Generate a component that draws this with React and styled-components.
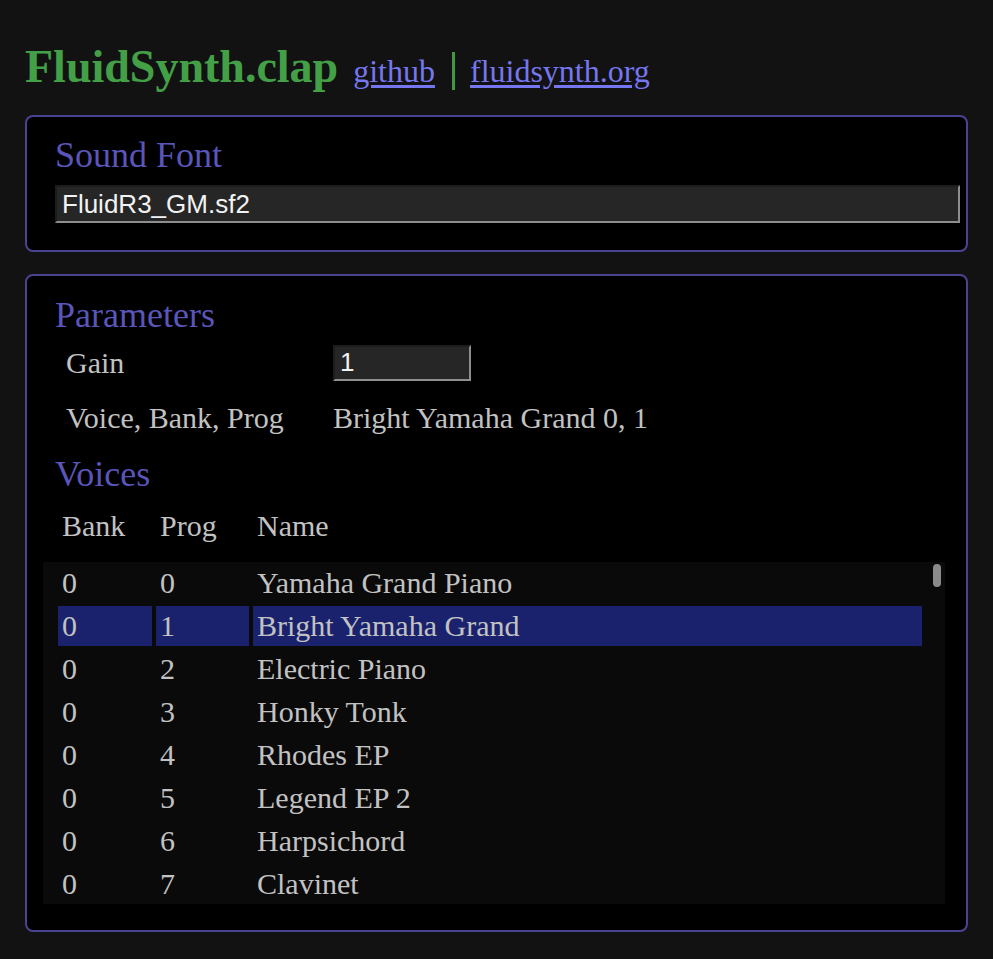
import React from 'react'
import styled, { createGlobalStyle } from 'styled-components'

const GlobalStyle = createGlobalStyle`
  html, body {
    margin: 0;
    padding: 0;
    background: #121212;
  }
  body {
    min-height: 100vh;
    font-family: "Liberation Serif", "Times New Roman", serif;
    color: #c2c2c2;
  }
`

const Page = styled.div`
  padding: 40px 25px 24px 25px;
  display: flex;
  flex-direction: column;
  gap: 22px;
`

const Header = styled.div`
  display: flex;
  align-items: baseline;
  line-height: 53px;
  height: 53px;
`

const Title = styled.h1`
  margin: 0;
  font-size: 46px;
  font-weight: bold;
  color: #43a047;
  line-height: 53px;
  margin-right: 15px;
`

const HeaderLink = styled.a`
  font-size: 32px;
  color: #7676ee;
  text-decoration: underline;
  text-underline-offset: 3px;
`

const Divider = styled.span`
  display: inline-block;
  width: 3px;
  height: 38px;
  background: #3f9a3f;
  margin: 0 15px 0 17px;
  align-self: center;
  transform: translateY(4px);
`

const Panel = styled.section`
  border: 2px solid #4a4392;
  border-radius: 8px;
  background: #000;
  padding: ${p => p.$top}px 6px ${p => p.$bottom}px 16px;
  display: flex;
  flex-direction: column;
`

const Heading = styled.h2`
  margin: 0 0 0 12px;
  font-size: 36px;
  font-weight: normal;
  line-height: 41px;
  color: #5a55b8;
`

const TextInput = styled.input`
  box-sizing: border-box;
  font-family: "Liberation Sans", Arial, sans-serif;
  font-size: 26px;
  color: #f2f2f2;
  background: #262626;
  border-style: solid;
  border-width: 2px;
  border-color: #1c1c1c #8e8e8e #8e8e8e #1c1c1c;
  padding: 0 5px;
  height: ${p => p.$h}px;
  width: ${p => p.$w || 'auto'};
  outline: none;
`

const SoundFontInput = styled(TextInput)`
  margin: 9px 0 0 12px;
`

const Params = styled.div`
  margin: -1px 0 0 23px;
  display: grid;
  grid-template-columns: 267px 1fr;
  grid-auto-rows: 55px;
  align-items: center;
  font-size: 30px;
  line-height: 34px;
`

const VoicesHeading = styled(Heading)`
  margin-top: 9px;
`

const ColumnRow = styled.div`
  display: grid;
  grid-template-columns: 94px 93px 1fr;
  column-gap: 4px;
  height: 40px;
  font-size: 30px;
  line-height: 34px;
`

const Cell = styled.div`
  display: flex;
  align-items: center;
  padding-left: 4px;
  white-space: nowrap;
  background: ${p => (p.$selected ? '#1a226e' : 'transparent')};
`

const ColumnHeader = styled(ColumnRow)`
  margin: 11px 0 0 15px;
`

const VoiceList = styled.div`
  margin: 16px 15px 0 0;
  height: 342px;
  background: #0a0a0a;
  display: flex;
  overflow: hidden;
`

const Rows = styled.div`
  flex: 1;
  padding: 1px 11px 0 15px;
  display: flex;
  flex-direction: column;
  gap: 3px;
`

const VoiceRow = styled(ColumnRow)`
  flex: 0 0 40px;
  cursor: default;
`

const ScrollTrack = styled.div`
  flex: 0 0 12px;
  padding-top: 2px;
`

const ScrollThumb = styled.div`
  width: 8px;
  border-radius: 4px;
  background: #8a8a8a;
`

const presets = [
  'Yamaha Grand Piano', 'Bright Yamaha Grand', 'Electric Piano', 'Honky Tonk',
  'Rhodes EP', 'Legend EP 2', 'Harpsichord', 'Clavinet', 'Celesta', 'Glockenspiel',
  'Music Box', 'Vibraphone', 'Marimba', 'Xylophone', 'Tubular Bells', 'Dulcimer',
  'DrawbarOrgan', 'Percussive Organ', 'Rock Organ', 'Church Organ', 'Reed Organ',
  'Accordion', 'Harmonica', 'Bandoneon', 'Nylon String Guitar', 'Steel String Guitar',
  'Jazz Guitar', 'Clean Guitar', 'Palm Muted Guitar', 'Overdrive Guitar',
  'Distortion Guitar', 'Guitar Harmonics', 'Acoustic Bass', 'Fingered Bass',
  'Picked Bass', 'Fretless Bass', 'Slap Bass', 'Pop Bass', 'Synth Bass 1',
  'Synth Bass 2', 'Violin', 'Viola', 'Cello', 'Contrabass', 'Tremolo',
  'Pizzicato Section', 'Harp', 'Timpani', 'Strings', 'Slow Strings',
  'Synth Strings 1', 'Synth Strings 2', 'Ahh Choir', 'Ohh Voices', 'Synth Voice',
  'Orchestra Hit', 'Trumpet', 'Trombone', 'Tuba', 'Muted Trumpet', 'French Horns',
  'Brass Section', 'Synth Brass 1', 'Synth Brass 2', 'Soprano Sax', 'Alto Sax',
  'Tenor Sax', 'Baritone Sax', 'Oboe', 'English Horn', 'Bassoon', 'Clarinet',
  'Piccolo', 'Flute', 'Recorder', 'Pan Flute', 'Bottle Chiff', 'Shakuhachi',
  'Whistle', 'Ocarina', 'Square Lead', 'Saw Wave', 'Calliope Lead', 'Chiffer Lead',
  'Charang', 'Solo Vox', 'Fifth Sawtooth Wave', 'Bass & Lead', 'Fantasia',
  'Warm Pad', 'Polysynth', 'Space Voice', 'Bowed Glass', 'Metal Pad', 'Halo Pad',
  'Sweep Pad', 'Ice Rain', 'Soundtrack', 'Crystal', 'Atmosphere', 'Brightness',
  'Goblin', 'Echo Drops', 'Star Theme', 'Sitar', 'Banjo', 'Shamisen', 'Koto',
  'Kalimba', 'BagPipe', 'Fiddle', 'Shenai', 'Tinker Bell', 'Agogo', 'Steel Drums',
  'Woodblock', 'Taiko Drum', 'Melodic Tom', 'Synth Drum', 'Reverse Cymbal',
  'Fret Noise', 'Breath Noise', 'Seashore', 'Birds', 'Telephone', 'Helicopter',
  'Applause', 'Gun Shot'
]

const voices = presets.map((name, prog) => ({ bank: 0, prog, name }))

// only the rows that fit in the list window are rendered
const VISIBLE = 8
const LIST_HEIGHT = 342

const App = () => {
  const selected = { bank: 0, prog: 1 }
  const scrollTop = 0
  const current = voices.find(v => v.bank === selected.bank && v.prog === selected.prog)
  const shown = voices.slice(scrollTop, scrollTop + VISIBLE)
  const thumbHeight = Math.max(23, Math.round((LIST_HEIGHT * VISIBLE) / voices.length))

  return (
    <>
      <GlobalStyle />
      <Page>
        <Header>
          <Title>FluidSynth.clap</Title>
          <HeaderLink href="#github">github</HeaderLink>
          <Divider />
          <HeaderLink href="#fluidsynth">fluidsynth.org</HeaderLink>
        </Header>

        <Panel $top={18} $bottom={27}>
          <Heading>Sound Font</Heading>
          <SoundFontInput $h={38} defaultValue="FluidR3_GM.sf2" />
        </Panel>

        <Panel $top={19} $bottom={26}>
          <Heading>Parameters</Heading>
          <Params>
            <div>Gain</div>
            <div>
              <TextInput $h={36} $w="138px" defaultValue="1" />
            </div>
            <div>Voice, Bank, Prog</div>
            <div>{current.name} {current.bank}, {current.prog}</div>
          </Params>

          <VoicesHeading>Voices</VoicesHeading>
          <ColumnHeader>
            <Cell>Bank</Cell>
            <Cell>Prog</Cell>
            <Cell>Name</Cell>
          </ColumnHeader>
          <VoiceList>
            <Rows>
              {shown.map(v => {
                const isSel = v.bank === selected.bank && v.prog === selected.prog
                return (
                  <VoiceRow key={`${v.bank}-${v.prog}`}>
                    <Cell $selected={isSel}>{v.bank}</Cell>
                    <Cell $selected={isSel}>{v.prog}</Cell>
                    <Cell $selected={isSel}>{v.name}</Cell>
                  </VoiceRow>
                )
              })}
            </Rows>
            <ScrollTrack>
              <ScrollThumb style={{ height: thumbHeight }} />
            </ScrollTrack>
          </VoiceList>
        </Panel>
      </Page>
    </>
  )
}

export default App
